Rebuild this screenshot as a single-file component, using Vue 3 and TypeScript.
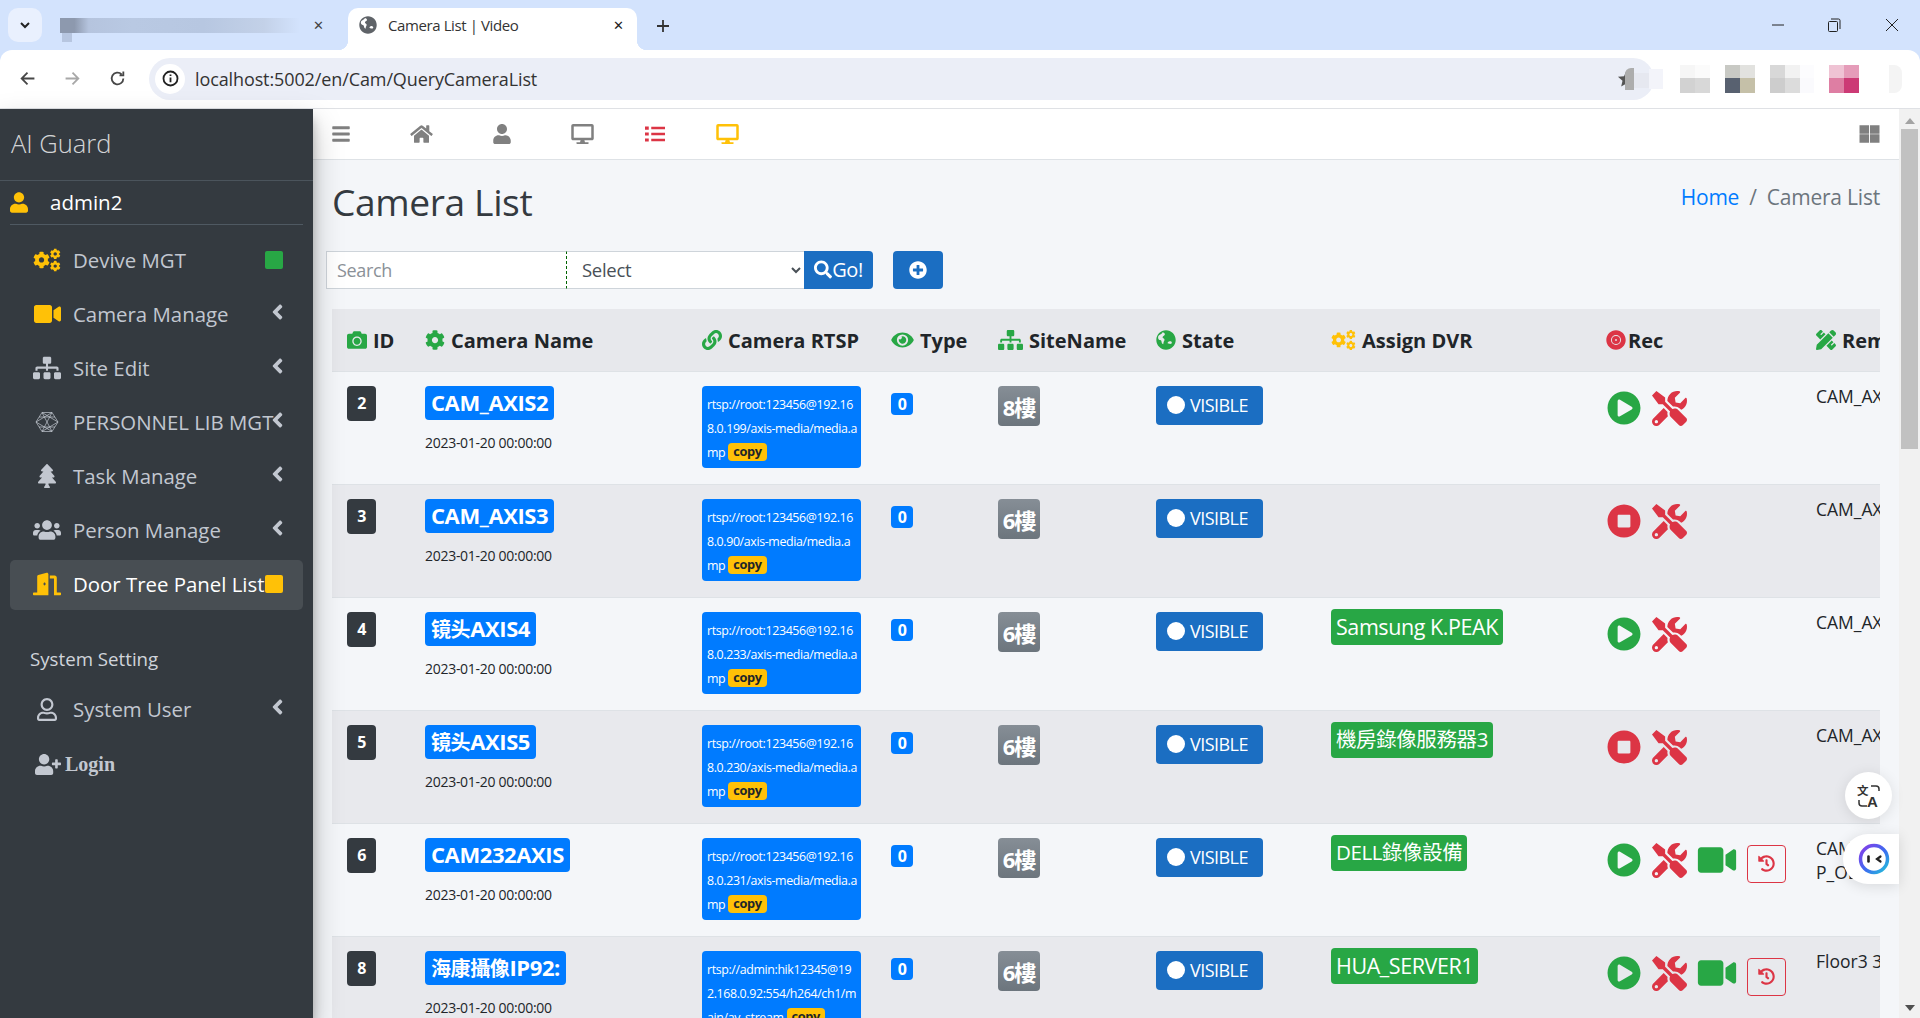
<script setup lang="ts">
import { h } from 'vue'

type Glyph = { vb: string; paths: { d: string; t?: string }[] }
const cog = 'M487.4 315.7l-42.6-24.6c4.3-23.2 4.3-47 0-70.2l42.6-24.6c4.9-2.8 7.1-8.6 5.5-14-11.1-35.6-30-67.8-54.7-94.6-3.8-4.1-10-5.1-14.8-2.3L380.8 110c-17.9-15.4-38.5-27.3-60.8-35.1V25.8c0-5.6-3.9-10.5-9.4-11.7-36.7-8.2-74.3-7.8-109.2 0-5.5 1.2-9.4 6.1-9.4 11.7V75c-22.2 7.9-42.8 19.8-60.8 35.1L88.7 85.5c-4.9-2.8-11-1.9-14.8 2.3-24.7 26.7-43.6 58.9-54.7 94.6-1.7 5.4.6 11.2 5.5 14L67.3 221c-4.3 23.2-4.3 47 0 70.2l-42.6 24.6c-4.9 2.8-7.1 8.6-5.5 14 11.1 35.6 30 67.8 54.7 94.6 3.8 4.1 10 5.1 14.8 2.3l42.6-24.6c17.9 15.4 38.5 27.3 60.8 35.1v49.2c0 5.6 3.9 10.5 9.4 11.7 36.7 8.2 74.3 7.8 109.2 0 5.5-1.2 9.4-6.1 9.4-11.7v-49.2c22.2-7.9 42.8-19.8 60.8-35.1l42.6 24.6c4.9 2.8 11 1.9 14.8-2.3 24.7-26.7 43.6-58.9 54.7-94.6 1.5-5.5-.7-11.3-5.6-14.1zM256 336c-44.1 0-80-35.9-80-80s35.9-80 80-80 80 35.9 80 80-35.9 80-80 80z'
const one = (vb: string, d: string): Glyph => ({ vb, paths: [{ d }] })
const icons: Record<string, Glyph> = {
  bars: one('0 0 448 512', 'M16 132h416c8.837 0 16-7.163 16-16V76c0-8.837-7.163-16-16-16H16C7.163 60 0 67.163 0 76v40c0 8.837 7.163 16 16 16zm0 160h416c8.837 0 16-7.163 16-16v-40c0-8.837-7.163-16-16-16H16c-8.837 0-16 7.163-16 16v40c0 8.837 7.163 16 16 16zm0 160h416c8.837 0 16-7.163 16-16v-40c0-8.837-7.163-16-16-16H16c-8.837 0-16 7.163-16 16v40c0 8.837 7.163 16 16 16z'),
  user: one('0 0 448 512', 'M224 256c70.7 0 128-57.3 128-128S294.7 0 224 0 96 57.3 96 128s57.3 128 128 128zm89.6 32h-16.7c-22.2 10.2-46.9 16-72.9 16s-50.6-5.8-72.9-16h-16.7C60.2 288 0 348.2 0 422.4V464c0 26.5 21.5 48 48 48h352c26.5 0 48-21.5 48-48v-41.6c0-74.2-60.2-134.4-134.4-134.4z'),
  home: one('0 0 576 512', 'M280.37 148.26L96 300.11V464a16 16 0 0 0 16 16l112.06-.29a16 16 0 0 0 15.92-16V368a16 16 0 0 1 16-16h64a16 16 0 0 1 16 16v95.64a16 16 0 0 0 16 16.05L464 480a16 16 0 0 0 16-16V300L295.67 148.26a12.19 12.19 0 0 0-15.3 0zM571.6 251.47L488 182.56V44.05a12 12 0 0 0-12-12h-56a12 12 0 0 0-12 12v72.61L318.47 43a48 48 0 0 0-61 0L4.34 251.47a12 12 0 0 0-1.6 16.9l25.5 31A12 12 0 0 0 45.15 301l235.22-193.74a12.19 12.19 0 0 1 15.3 0L530.9 301a12 12 0 0 0 16.9-1.6l25.5-31a12 12 0 0 0-1.7-16.93z'),
  desktop: one('0 0 576 512', 'M528 0H48C21.5 0 0 21.5 0 48v320c0 26.5 21.5 48 48 48h192l-16 48h-72c-13.3 0-24 10.7-24 24s10.7 24 24 24h272c13.3 0 24-10.7 24-24s-10.7-24-24-24h-72l-16-48h192c26.5 0 48-21.5 48-48V48c0-26.5-21.5-48-48-48zm-16 352H64V64h448v288z'),
  list: one('0 0 512 512', 'M0 64h96v80H0zM160 72h352v64H160zM0 216h96v80H0zM160 224h352v64H160zM0 368h96v80H0zM160 376h352v64H160z'),
  grid: one('0 0 512 512', 'M0 32h244v216H0zM268 32h244v216H268zM0 264h244v216H0zM268 264h244v216H268z'),
  video: one('0 0 576 512', 'M336.2 64H47.8C21.4 64 0 85.4 0 111.8v288.4C0 426.6 21.4 448 47.8 448h288.4c26.4 0 47.8-21.4 47.8-47.8V111.8c0-26.4-21.4-47.8-47.8-47.8zm189.4 37.7L416 177.3v157.4l109.6 75.5c21.2 14.6 50.4-.3 50.4-25.8V127.5c0-25.4-29.1-40.4-50.4-25.8z'),
  search: one('0 0 512 512', 'M505 442.7L405.3 343c-4.5-4.5-10.6-7-17-7H372c27.6-35.3 44-79.7 44-128C416 93.1 322.9 0 208 0S0 93.1 0 208s93.1 208 208 208c48.3 0 92.7-16.4 128-44v16.3c0 6.4 2.5 12.5 7 17l99.7 99.7c9.4 9.4 24.6 9.4 33.9 0l28.3-28.3c9.4-9.4 9.4-24.6.1-34zM208 336c-70.7 0-128-57.2-128-128 0-70.7 57.2-128 128-128 70.7 0 128 57.2 128 128 0 70.7-57.2 128-128 128z'),
  plus: one('0 0 512 512', 'M256 8C119 8 8 119 8 256s111 248 248 248 248-111 248-248S393 8 256 8zm144 276c0 6.6-5.4 12-12 12h-92v92c0 6.6-5.4 12-12 12h-56c-6.6 0-12-5.4-12-12v-92h-92c-6.6 0-12-5.4-12-12v-56c0-6.6 5.4-12 12-12h92v-92c0-6.6 5.4-12 12-12h56c6.6 0 12 5.4 12 12v92h92c6.6 0 12 5.4 12 12v56z'),
  camera: one('0 0 512 512', 'M512 144v288c0 26.5-21.5 48-48 48H48c-26.5 0-48-21.5-48-48V144c0-26.5 21.5-48 48-48h88l12.3-32.9c7-18.7 24.9-31.1 44.9-31.1h125.5c20 0 37.9 12.4 44.9 31.1L376 96h88c26.5 0 48 21.5 48 48zM376 288c0-66.2-53.8-120-120-120s-120 53.8-120 120 53.8 120 120 120 120-53.8 120-120zm-32 0c0 48.5-39.5 88-88 88s-88-39.5-88-88 39.5-88 88-88 88 39.5 88 88z'),
  cog: one('0 0 512 512', cog),
  cogs: { vb: '0 0 640 512', paths: [{ d: cog, t: 'translate(0 60) scale(.76)' }, { d: cog, t: 'translate(385 -6) scale(.48)' }, { d: cog, t: 'translate(385 272) scale(.48)' }] },
  link: one('0 0 512 512', 'M326.612 185.391c59.747 59.809 58.927 155.698.36 214.59-.11.12-.24.25-.36.37l-67.2 67.2c-59.27 59.27-155.699 59.262-214.96 0-59.27-59.26-59.27-155.7 0-214.96l37.106-37.106c9.84-9.84 26.786-3.3 27.294 10.606.648 17.722 3.826 35.527 9.69 52.721 1.986 5.822.567 12.262-3.783 16.612l-13.087 13.087c-28.026 28.026-28.905 73.66-1.155 101.96 28.024 28.579 74.086 28.749 102.325.51l67.2-67.19c28.191-28.191 28.073-73.757 0-101.83-3.701-3.694-7.429-6.564-10.341-8.569a16.037 16.037 0 0 1-6.947-12.606c-.396-10.567 3.348-21.456 11.698-29.806l21.054-21.055c5.521-5.521 14.182-6.199 20.584-1.731a152.482 152.482 0 0 1 20.522 17.197zM467.547 44.449c-59.261-59.262-155.69-59.27-214.96 0l-67.2 67.2c-.12.12-.25.25-.36.37-58.566 58.892-59.387 154.781.36 214.59a152.454 152.454 0 0 0 20.521 17.196c6.402 4.468 15.064 3.789 20.584-1.731l21.054-21.055c8.35-8.35 12.094-19.239 11.698-29.806a16.037 16.037 0 0 0-6.947-12.606c-2.912-2.005-6.64-4.875-10.341-8.569-28.073-28.073-28.191-73.639 0-101.83l67.2-67.19c28.239-28.239 74.3-28.069 102.325.51 27.75 28.3 26.872 73.934-1.155 101.96l-13.087 13.087c-4.35 4.35-5.769 10.79-3.783 16.612 5.864 17.194 9.042 34.999 9.69 52.721.509 13.906 17.454 20.446 27.294 10.606l37.106-37.106c59.271-59.259 59.271-155.699.001-214.959z'),
  eye: one('0 0 576 512', 'M572.52 241.4C518.29 135.59 410.93 64 288 64S57.68 135.64 3.48 241.41a32.35 32.35 0 0 0 0 29.19C57.71 376.41 165.07 448 288 448s230.32-71.64 284.52-177.41a32.35 32.35 0 0 0 0-29.19zM288 400a144 144 0 1 1 144-144 143.93 143.93 0 0 1-144 144zm0-240a95.31 95.31 0 0 0-25.31 3.79 47.85 47.85 0 0 1-66.9 66.9A95.78 95.78 0 1 0 288 160z'),
  sitemap: one('0 0 640 512', 'M128 352H32c-17.67 0-32 14.33-32 32v96c0 17.67 14.33 32 32 32h96c17.67 0 32-14.33 32-32v-96c0-17.67-14.33-32-32-32zm-24-80h192v48h48v-48h192v48h48v-57.59c0-21.17-17.23-38.41-38.41-38.41H344v-64h40c17.67 0 32-14.33 32-32V32c0-17.67-14.33-32-32-32H256c-17.67 0-32 14.33-32 32v96c0 17.67 14.33 32 32 32h40v64H94.41C73.23 224 56 241.23 56 262.41V320h48v-48zm264 80h-96c-17.67 0-32 14.33-32 32v96c0 17.67 14.33 32 32 32h96c17.67 0 32-14.33 32-32v-96c0-17.67-14.33-32-32-32zm240 0h-96c-17.67 0-32 14.33-32 32v96c0 17.67 14.33 32 32 32h96c17.67 0 32-14.33 32-32v-96c0-17.67-14.33-32-32-32z'),
  users: one('0 0 640 512', 'M96 224c35.3 0 64-28.7 64-64s-28.7-64-64-64-64 28.7-64 64 28.7 64 64 64zm448 0c35.3 0 64-28.7 64-64s-28.7-64-64-64-64 28.7-64 64 28.7 64 64 64zm32 32h-64c-17.6 0-33.5 7.1-45.1 18.6 40.3 22.1 68.9 62 75.1 109.4h66c17.7 0 32-14.3 32-32v-32c0-35.3-28.7-64-64-64zm-256 0c61.9 0 112-50.1 112-112S381.9 32 320 32 208 82.1 208 144s50.1 112 112 112zm76.8 32h-8.3c-20.8 10-43.9 16-68.5 16s-47.6-6-68.5-16h-8.3C179.6 288 128 339.6 128 403.2V432c0 26.5 21.5 48 48 48h288c26.5 0 48-21.5 48-48v-28.8c0-63.6-51.6-115.2-115.2-115.2zm-223.7-13.4C161.5 263.1 145.6 256 128 256H64c-35.3 0-64 28.7-64 64v32c0 17.7 14.3 32 32 32h65.9c6.3-47.4 34.9-87.3 75.2-109.4z'),
  userPlus: one('0 0 640 512', 'M624 208h-64v-64c0-8.8-7.2-16-16-16h-32c-8.8 0-16 7.2-16 16v64h-64c-8.8 0-16 7.2-16 16v32c0 8.8 7.2 16 16 16h64v64c0 8.8 7.2 16 16 16h32c8.8 0 16-7.2 16-16v-64h64c8.8 0 16-7.2 16-16v-32c0-8.8-7.2-16-16-16zm-400 48c70.7 0 128-57.3 128-128S294.7 0 224 0 96 57.3 96 128s57.3 128 128 128zm89.6 32h-16.7c-22.2 10.2-46.9 16-72.9 16s-50.6-5.8-72.9-16h-16.7C60.2 288 0 348.2 0 422.4V464c0 26.5 21.5 48 48 48h352c26.5 0 48-21.5 48-48v-41.6c0-74.2-60.2-134.4-134.4-134.4z'),
  userO: one('0 0 448 512', 'M313.6 304c-28.7 0-42.5 16-89.6 16-47.1 0-60.8-16-89.6-16C60.2 304 0 364.2 0 438.4V464c0 26.5 21.5 48 48 48h352c26.5 0 48-21.5 48-48v-25.6c0-74.2-60.2-134.4-134.4-134.4zM400 464H48v-25.6c0-47.6 38.8-86.4 86.4-86.4 14.6 0 38.3 16 89.6 16 51.7 0 74.9-16 89.6-16 47.6 0 86.4 38.8 86.4 86.4V464zM224 288c79.5 0 144-64.5 144-144S303.5 0 224 0 80 64.5 80 144s64.5 144 144 144zm0-240c52.9 0 96 43.1 96 96s-43.1 96-96 96-96-43.1-96-96 43.1-96 96-96z'),
  tree: one('0 0 384 512', 'M378.31 378.49L298.42 288h30.63c9.01 0 16.98-5 20.78-13.06 3.8-8.04 2.55-17.26-3.28-24.05L268.42 160h28.89c9.1 0 17.3-5.35 20.86-13.61 3.52-8.13 1.86-17.59-4.24-24.08L203.66 4.83c-6.03-6.45-17.28-6.45-23.32 0L70.06 122.31c-6.1 6.49-7.75 15.95-4.24 24.08C69.38 154.65 77.59 160 86.69 160h28.89l-78.14 90.91c-5.81 6.78-7.06 15.99-3.27 24.04C37.97 283 45.93 288 54.95 288h30.63L5.69 378.49c-6 6.79-7.36 16.09-3.56 24.26 3.75 8.05 12 13.25 21 13.25H160v24.45l-30.29 48.4c-5.32 10.64 2.42 23.16 14.31 23.16h95.96c11.89 0 19.63-12.52 14.31-23.16L224 440.45V416h136.87c9 0 17.25-5.2 21-13.25 3.81-8.17 2.45-17.47-3.56-24.26z'),
  door: one('0 0 640 512', 'M624 448h-80V113.45C544 86.19 522.47 64 496 64H384v64h96v384h144c8.84 0 16-7.16 16-16v-32c0-8.84-7.16-16-16-16zM312.24 1.01l-192 49.74C105.99 54.44 96 67.7 96 82.92V448H16c-8.84 0-16 7.16-16 16v32c0 8.84 7.16 16 16 16h336V33.18c0-21.58-19.56-37.41-39.76-32.17zM264 288c-13.25 0-24-14.33-24-32s10.75-32 24-32 24 14.33 24 32-10.75 32-24 32z'),
  history: one('0 0 512 512', 'M504 255.531c.253 136.64-111.18 248.372-247.82 248.468-59.015.042-113.223-20.53-155.822-54.911-11.077-8.94-11.905-25.541-1.839-35.607l11.267-11.267c8.609-8.609 22.353-9.551 31.891-1.984C173.062 425.135 212.781 440 256 440c101.705 0 184-82.311 184-184 0-101.705-82.311-184-184-184-48.814 0-93.149 18.969-126.068 49.932l50.754 50.754c10.08 10.08 2.941 27.314-11.313 27.314H24c-8.837 0-16-7.163-16-16V38.627c0-14.254 17.234-21.393 27.314-11.314l49.372 49.372C129.209 34.136 189.552 8 256 8c136.81 0 247.747 110.78 248 247.531zm-180.912 78.784l9.823-12.63c8.138-10.463 6.253-25.542-4.21-33.679L288 256.349V152c0-13.255-10.745-24-24-24h-16c-13.255 0-24 10.745-24 24v135.651l65.409 50.874c10.463 8.137 25.541 6.253 33.679-4.21z'),
  tools: one('0 0 512 512', 'M501.1 395.7L384 278.6c-23.1-23.1-57.6-27.6-85.4-13.9L192 158.1V96L64 0 0 64l96 128h62.1l106.6 106.6c-13.6 27.8-9.2 62.3 13.9 85.4l117.1 117.1c14.6 14.6 38.2 14.6 52.7 0l52.7-52.7c14.5-14.6 14.5-38.2 0-52.7zM331.7 225c28.3 0 54.9 11 74.9 31l19.4 19.4c15.8-6.9 30.8-16.5 43.8-29.5 37.1-37.1 49.7-89.3 37.9-136.7-2.2-9-13.5-12.1-20.1-5.5l-74.4 74.4-67.9-11.3L334 98.9l74.4-74.4c6.6-6.6 3.4-17.9-5.7-20.2-47.4-11.7-99.6.9-136.6 37.9-28.5 28.5-41.9 66.1-41.2 103.6l82.1 82.1c8.1-1.9 16.5-2.9 24.7-2.9zm-103.9 82l-56.7-56.7L18.7 402.8c-25 25-25 65.5 0 90.5s65.5 25 90.5 0l123.6-123.6c-7.6-19.9-9.9-41.6-5-62.7zM64 472c-13.2 0-24-10.8-24-24 0-13.3 10.7-24 24-24s24 10.7 24 24c0 13.2-10.7 24-24 24z'),
  play: one('0 0 512 512', 'M256 8C119 8 8 119 8 256s111 248 248 248 248-111 248-248S393 8 256 8zm115.7 272l-176 101c-15.8 8.8-35.7-2.5-35.7-21V152c0-18.4 19.8-29.8 35.7-21l176 107c16.4 9.2 16.4 32.9 0 42z'),
  stop: one('0 0 512 512', 'M256 8C119 8 8 119 8 256s111 248 248 248 248-111 248-248S393 8 256 8zm96 328c0 8.8-7.2 16-16 16H176c-8.8 0-16-7.2-16-16V176c0-8.8 7.2-16 16-16h160c8.8 0 16 7.2 16 16v160z'),
  vinyl: one('0 0 512 512', 'M256 152a104 104 0 1 0 104 104 104 104 0 0 0-104-104zm0 128a24 24 0 1 1 24-24 24 24 0 0 1-24 24zm0-272C119 8 8 119 8 256s111 248 248 248 248-111 248-248S393 8 256 8zm0 376a128 128 0 1 1 128-128 128 128 0 0 1-128 128z'),
  ruler: one('0 0 512 512', 'M109.46 244.04l134.58-134.56-44.12-44.12-61.68 61.68a7.919 7.919 0 0 1-11.21 0l-11.21-11.21c-3.1-3.1-3.1-8.12 0-11.21l61.68-61.68-33.64-33.65C131.47-3.1 111.39-3.1 99 9.29L9.29 99c-12.38 12.39-12.39 32.47 0 44.86l100.17 100.18zm388.47-116.8c18.76-18.76 18.75-49.17 0-67.93l-45.25-45.25c-18.76-18.76-49.18-18.76-67.95 0l-46.02 46.01 113.2 113.2 46.02-46.03zM316.08 82.71l-297 296.96L.32 487.11c-2.53 14.49 10.09 27.11 24.59 24.56l107.45-18.84L429.28 195.9 316.08 82.71zm186.63 285.43l-33.64-33.64-61.68 61.68c-3.1 3.1-8.12 3.1-11.21 0l-11.21-11.21c-3.09-3.1-3.09-8.12 0-11.21l61.68-61.68-44.14-44.14L267.93 402.5l100.21 100.2c12.39 12.39 32.47 12.39 44.86 0l89.71-89.7c12.39-12.39 12.39-32.47 0-44.86z'),
  globe: one('0 0 512 512', 'M256 8C119 8 8 119 8 256s111 248 248 248 248-111 248-248S393 8 256 8zM168 60c-8 30-40 50-70 62-30 12-50 40-44 80 4 30 24 50 54 54 20 2 30 20 34 44 4 26 14 50 40 66 14-30 6-60 26-84 16-20 14-46-8-62-18-12-34-20-30-42 4-26 36-30 52-52 12-16 6-50-54-66zm210 230c-30-6-58 0-74 22-12 16-4 34 18 36 24 2 44 14 66 4 24-10 26-52-10-62z'),
  angle: one('0 0 256 512', 'M31.7 239l136-136c9.4-9.4 24.6-9.4 33.9 0l22.6 22.6c9.4 9.4 9.4 24.6 0 33.9L127.9 256l96.4 96.4c9.4 9.4 9.4 24.6 0 33.9L201.7 409c-9.4 9.4-24.6 9.4-33.9 0l-136-136c-9.5-9.4-9.5-24.6-.1-34z'),
}
const Ic = (p: { n: string }) =>
  h('svg', { viewBox: icons[p.n].vb, fill: 'currentColor', 'fill-rule': 'evenodd', 'aria-hidden': 'true' },
    icons[p.n].paths.map((s) => h('path', { d: s.d, transform: s.t })))
Ic.props = ['n']

const menu = [
  { icon: 'cogs', label: 'Devive MGT', tone: 'yellow', mark: 'green' },
  { icon: 'video', label: 'Camera Manage', tone: 'yellow', arrow: true },
  { icon: 'sitemap', label: 'Site Edit', arrow: true },
  { icon: 'hex', label: 'PERSONNEL LIB MGT', arrow: true },
  { icon: 'tree', label: 'Task Manage', arrow: true },
  { icon: 'users', label: 'Person Manage', arrow: true },
  { icon: 'door', label: 'Door Tree Panel List', tone: 'yellow', mark: 'yellow', active: true },
]
const heads = [
  { icon: 'camera', label: 'ID', tone: 'green', cls: 'w-id' },
  { icon: 'cog', label: 'Camera Name', tone: 'green', cls: 'w-name' },
  { icon: 'link', label: 'Camera RTSP', tone: 'green', cls: 'w-rtsp' },
  { icon: 'eye', label: 'Type', tone: 'green', cls: 'w-type' },
  { icon: 'sitemap', label: 'SiteName', tone: 'green', cls: 'w-site' },
  { icon: 'globe', label: 'State', tone: 'green', cls: 'w-state' },
  { icon: 'cogs', label: 'Assign DVR', tone: 'yellow', cls: 'w-dvr' },
  { icon: 'vinyl', label: 'Rec', tone: 'red', cls: 'w-rec tight' },
  { icon: 'ruler', label: 'Remark', tone: 'green', cls: 'w-rem' },
]
const axis = (ip: string) => ['rtsp://root:123456@192.16', `8.0.${ip}/axis-media/media.a`, 'mp']
const rows = [
  { id: 2, zh: '', name: 'CAM_AXIS2', rtsp: axis('199'), site: '8樓', dvr: '', running: false, extra: false, rem: 'CAM_AXIS2' },
  { id: 3, zh: '', name: 'CAM_AXIS3', rtsp: axis('90'), site: '6樓', dvr: '', running: true, extra: false, rem: 'CAM_AXIS3' },
  { id: 4, zh: '镜头', name: 'AXIS4', rtsp: axis('233'), site: '6樓', dvr: 'Samsung K.PEAK', running: false, extra: false, rem: 'CAM_AXIS4' },
  { id: 5, zh: '镜头', name: 'AXIS5', rtsp: axis('230'), site: '6樓', dvr: '機房錄像服務器3', running: true, extra: false, rem: 'CAM_AXIS5' },
  { id: 6, zh: '', name: 'CAM232AXIS', rtsp: axis('231'), site: '6樓', dvr: 'DELL錄像設備', running: false, extra: true, rem: 'CAM232A\nP_OE' },
  { id: 8, zh: '海康攝像', name: 'IP92:', rtsp: ['rtsp://admin:hik12345@19', '2.168.0.92:554/h264/ch1/m', 'ain/av_stream'], site: '6樓', dvr: 'HUA_SERVER1', running: false, extra: true, rem: 'Floor3 3F' },
]
const hasCjk = (s: string) => /[^\x00-\x7f]/.test(s)
const tiles = [
  { cls: 't1', colors: ['#f6f6f6', '#fbfbfb', '#d2d2d2', '#d8d8d8'] },
  { cls: 't1', colors: ['#c8c9c4', '#e2e2df', '#586170', '#c5c0a8'] },
  { cls: 't2', colors: ['#d8d8d8', '#f2f2f2', '#fcfcfe', '#cdcdcd', '#dcdcdc', '#fafafd'] },
  { cls: 't1', colors: ['#efc3d4', '#e59cb9', '#de7ea3', '#cc3a75'] },
]
</script>

<template>
  <div class="page">
    <header class="chrome">
      <div class="tabstrip">
        <button class="tab-menu" aria-label="tabs">
          <svg viewBox="0 0 12 8"><path d="M2 2l4 4 4-4" /></svg>
        </button>
        <div class="tab-blur">
          <span class="blur-bar"></span>
          <span class="tab-x">✕</span>
        </div>
        <div class="tab-active">
          <svg class="favicon" viewBox="0 0 512 512"><path fill="#5f6368" fill-rule="evenodd" :d="icons.globe.paths[0].d" /></svg>
          <span class="tab-title">Camera List | Video</span>
          <span class="tab-x dark">✕</span>
        </div>
        <svg class="new-tab" viewBox="0 0 14 14"><path d="M7 1v12M1 7h12" /></svg>
        <div class="win">
          <svg viewBox="0 0 14 14"><path d="M1 7h12" /></svg>
          <svg viewBox="0 0 14 14"><path d="M1.5 4.5a1 1 0 0 1 1-1h7a1 1 0 0 1 1 1v8a1 1 0 0 1-1 1h-7a1 1 0 0 1-1-1zM4 1h7.5a1.5 1.5 0 0 1 1.5 1.5V11" /></svg>
          <svg viewBox="0 0 14 14"><path d="M1 1l12 12M13 1L1 13" /></svg>
        </div>
      </div>
      <div class="toolbar">
        <svg class="tb-ico" viewBox="0 0 16 16"><path d="M14.5 8h-12M8 2.5L2.5 8 8 13.5" /></svg>
        <svg class="tb-ico off" viewBox="0 0 16 16"><path d="M1.5 8h12M8 2.5L13.5 8 8 13.500" /></svg>
        <svg class="tb-ico" viewBox="0 0 16 16"><path d="M13.5 8a5.5 5.5 0 1 1-1.6-3.9M13.5 1.5v3.6H9.9" /></svg>
        <div class="omni">
          <span class="omni-info">
            <svg viewBox="0 0 16 16"><circle cx="8" cy="8" r="6.6" /><path d="M8 7v4.5M8 4.2v1.4" /></svg>
          </span>
          <span class="url">localhost:5002/en/Cam/QueryCameraList</span>
          <span class="omni-star">
            <svg viewBox="0 0 20 20"><path d="M10 1l2.6 6 6.4.6-4.8 4.2 1.4 6.2L10 14.8 4.4 18l1.4-6.2L1 7.6 7.4 7z" /></svg>
            <i class="star-a"></i><i class="star-b"></i><i class="star-c"></i>
          </span>
        </div>
        <div class="exts">
          <div v-for="(t, i) in tiles" :key="i" :class="['mosaic', t.cls]">
            <i v-for="(c, j) in t.colors" :key="j" :style="{ background: c }"></i>
          </div>
          <i class="ext-last"></i>
        </div>
      </div>
    </header>

    <div class="body">
      <aside class="sidebar">
        <div class="brand">AI Guard</div>
        <div class="userpanel">
          <Ic n="user" class="up-ico" />
          <span>admin2</span>
        </div>
        <nav class="nav">
          <a v-for="m in menu" :key="m.label" :class="['item', { active: m.active }]">
            <span :class="['item-ico', m.tone]">
              <svg v-if="m.icon === 'hex'" class="hex" viewBox="0 0 24 24">
                <path d="M7 2.5h10L23 12l-6 9.5H7L1 12zM7 2.5L17 21.500M17 2.500L7 21.500M1 12l16-9.500M1 12l16 9.500M23 12L7 2.500M23 12L7 21.500M4 7h16M4 17h16" />
              </svg>
              <Ic v-else :n="m.icon" :class="'i-' + m.icon" />
            </span>
            <span class="item-label">{{ m.label }}</span>
            <Ic v-if="m.arrow" n="angle" class="arrow" />
            <i v-if="m.mark" :class="['mark', m.mark]"></i>
          </a>
          <div class="nav-head">System Setting</div>
          <a class="item">
            <span class="item-ico"><Ic n="userO" class="i-userO" /></span>
            <span class="item-label">System User</span>
            <Ic n="angle" class="arrow" />
          </a>
          <a class="login"><Ic n="userPlus" class="i-login" /><b>Login</b></a>
        </nav>
      </aside>

      <main class="main">
        <div class="topnav">
          <Ic n="bars" class="tn w18" />
          <Ic n="home" class="tn w23" />
          <Ic n="user" class="tn w18" />
          <Ic n="desktop" class="tn w25 nudge" />
          <Ic n="list" class="tn w20 red pull" />
          <Ic n="desktop" class="tn w25 yellow pull" />
          <Ic n="grid" class="tn w21 end" />
        </div>
        <section class="content">
          <div class="title-row">
            <h1>Camera List</h1>
            <div class="crumb"><a>Home</a><i>/</i><span>Camera List</span></div>
          </div>
          <form class="search" @submit.prevent>
            <input class="s-input" placeholder="Search" />
            <select class="s-select"><option>Select</option></select>
            <button class="s-go"><Ic n="search" class="go-ico" />Go!</button>
            <button class="s-add" aria-label="add"><Ic n="plus" class="add-ico" /></button>
          </form>
          <div class="table-wrap">
            <table>
              <thead>
                <tr>
                  <th v-for="c in heads" :key="c.label" :class="c.cls">
                    <span class="th-in">
                      <Ic :n="c.icon" :class="['th-ico', c.tone]" />{{ c.label }}
                    </span>
                  </th>
                </tr>
              </thead>
              <tbody>
                <tr v-for="r in rows" :key="r.id">
                  <td><span class="b-id">{{ r.id }}</span></td>
                  <td>
                    <span class="b-name"><span v-if="r.zh" class="zh">{{ r.zh }}</span>{{ r.name }}</span>
                    <div class="date">2023-01-20 00:00:00</div>
                  </td>
                  <td>
                    <div class="b-rtsp">
                      <div v-for="(l, i) in r.rtsp" :key="i" class="rline">
                        {{ l }}<span v-if="i === 2" class="copy">copy</span>
                      </div>
                    </div>
                  </td>
                  <td><span class="b-type">0</span></td>
                  <td><span class="b-site">{{ r.site }}</span></td>
                  <td>
                    <button class="b-state"><i class="dot"></i>VISIBLE</button>
                  </td>
                  <td class="dvr-cell"><span v-if="r.dvr" :class="['b-dvr', { cjk: hasCjk(r.dvr) }]">{{ r.dvr }}</span></td>
                  <td>
                    <div class="rec">
                      <Ic :n="r.running ? 'stop' : 'play'" :class="['r-ico', r.running ? 'red' : 'green']" />
                      <Ic n="tools" class="r-tools red" />
                      <template v-if="r.extra">
                        <Ic n="video" class="r-video green" />
                        <span class="r-hist"><Ic n="history" /></span>
                      </template>
                    </div>
                  </td>
                  <td class="rem">{{ r.rem }}</td>
                </tr>
              </tbody>
            </table>
          </div>
        </section>
        <button class="fl-trans" aria-label="translate">
          <svg viewBox="0 0 24 24">
            <text x="0" y="11" class="tr-zh">文</text>
            <text x="10" y="23" class="tr-en">A</text>
            <path d="M14 2h5a3 3 0 0 1 3 3v2M10 22H5a3 3 0 0 1-3-3v-3" />
          </svg>
        </button>
        <div class="fl-ai">
          <svg viewBox="0 0 32 32">
            <defs>
              <linearGradient id="aig" x1="0" y1="0" x2="1" y2="1">
                <stop offset="0" stop-color="#8a3be8" />
                <stop offset=".55" stop-color="#3b6cf0" />
                <stop offset="1" stop-color="#22c5d8" />
              </linearGradient>
            </defs>
            <circle cx="16" cy="16" r="13.500" fill="#fff" stroke="url(#aig)" stroke-width="3.500" />
            <path d="M10.500 13.500v5" stroke="#222" stroke-width="2.600" stroke-linecap="round" fill="none" />
            <path d="M22.500 13.500l-3.500 2.500 3.500 2.500" stroke="#222" stroke-width="2.200" stroke-linecap="round" fill="none" />
          </svg>
        </div>
      </main>

      <div class="scrollbar">
        <i class="up"></i>
        <div class="thumb"></div>
        <i class="down"></i>
      </div>
    </div>
  </div>
</template>

<style>
html, body { margin: 0; height: 1018px; overflow: hidden; background: #f4f6f9; }
</style>

<style scoped>
* { box-sizing: border-box; }
.page {
  width: 1920px; height: 1018px; overflow: hidden; display: flex; flex-direction: column;
  font-family: "Open Sans", "Noto Sans CJK TC", sans-serif; color: #212529;
  letter-spacing: -.025em;
}
.chrome { flex: none; background: #d3e3fd; }
.tabstrip { height: 50px; display: flex; align-items: flex-start; position: relative; padding: 8px 0 0 8px; }
.tab-menu { width: 34px; height: 34px; border: 0; border-radius: 10px; background: #e9f0fe; display: flex; align-items: center; justify-content: center; padding: 0; }
.tab-menu svg { width: 12px; height: 8px; fill: none; stroke: #222; stroke-width: 2; }
.tab-blur { width: 306px; display: flex; align-items: center; height: 34px; padding-left: 18px; }
.blur-bar { width: 240px; height: 15px; position: relative; background: linear-gradient(90deg, #8d99ae 0, #8d99ae 6%, #b5c4de 12%, #b9c9e3 30%, #b7c7e1 60%, #c3d1e8 85%, #d3e3fd 100%); }
.blur-bar::after { content: ""; position: absolute; left: 2px; top: 15px; width: 10px; height: 9px; background: #b7c6e0; }
.tab-x { font-size: 13px; font-weight: 700; color: #444; margin-left: 13px; font-family: "DejaVu Sans", sans-serif; }
.tab-active { width: 289px; height: 42px; background: #fff; border-radius: 10px 10px 0 0; display: flex; align-items: center; padding: 0 0 8px 11px; position: relative; }
.tab-active::before, .tab-active::after { content: ""; position: absolute; bottom: 0; width: 10px; height: 10px; }
.tab-active::before { left: -10px; background: radial-gradient(circle at 0 0, transparent 10px, #fff 10.500px); }
.tab-active::after { right: -10px; background: radial-gradient(circle at 100% 0, transparent 10px, #fff 10.500px); }
.favicon { width: 18px; height: 18px; flex: none; }
.tab-title { font-size: 15px; color: #333; margin-left: 11px; width: 213px; white-space: nowrap; }
.tab-x.dark { margin-left: 12px; color: #222; }
.new-tab { width: 14px; height: 14px; margin: 11px 0 0 19px; fill: none; stroke: #333; stroke-width: 1.800; }
.win { margin-left: auto; display: flex; gap: 44px; padding: 10px 21px 0 0; }
.win svg { width: 14px; height: 14px; fill: none; stroke: #222; stroke-width: 1; }
.win svg:nth-child(2) { margin-left: -2px; }
.toolbar { height: 59px; background: #fff; border-radius: 12px 12px 0 0; display: flex; align-items: center; padding: 0 0 1px 19px; border-bottom: 1px solid #dfe1e5; }
.tb-ico { width: 17px; height: 17px; fill: none; stroke: #474747; stroke-width: 1.700; flex: none; margin-right: 28px; }
.tb-ico.off { stroke: #a8a8a8; }
.tb-ico:nth-of-type(3) { margin-right: 24px; }
.omni { width: 1505px; height: 42px; margin-left: -1px; background: #ebeef7; border-radius: 21px; display: flex; align-items: center; padding-left: 6px; position: relative; }
.omni-info { width: 30px; height: 30px; border-radius: 50%; background: #fff; display: flex; align-items: center; justify-content: center; }
.omni-info svg { width: 17px; height: 17px; fill: none; stroke: #222; stroke-width: 1.700; }
.url { font-size: 18px; margin-left: 10px; color: #333; letter-spacing: -.006em; white-space: nowrap; }
.omni-star { position: absolute; left: 1468px; top: 10px; width: 48px; height: 22px; }
.omni-star svg { width: 19px; height: 22px; fill: #555; position: absolute; left: 0; top: 0; }
.omni-star i { position: absolute; }
.star-a { left: 8px; top: 0; width: 9px; height: 22px; background: #adadad; border-radius: 6px 0 0 0; }
.star-b { left: 17px; top: 5px; width: 15px; height: 15px; background: #e6e8f0; }
.star-c { left: 32px; top: 1px; width: 14px; height: 20px; background: #f3f4fa; }
.exts { display: flex; align-items: center; gap: 15px; margin-left: 26px; }
.mosaic { display: grid; grid-template-rows: 13px 15px; height: 28px; }
.mosaic.t1 { grid-template-columns: 15px 15px; }
.mosaic.t2 { grid-template-columns: 15px 15px 14px; }
.ext-last { width: 13px; height: 28px; margin-left: 15px; background: #f4f4f4; border-radius: 0 8px 8px 0; }

.body { flex: 1; min-height: 0; display: flex; position: relative; }
.sidebar { width: 313px; flex: none; background: #343a40; box-shadow: 0 14px 28px rgba(0,0,0,.25), 0 10px 10px rgba(0,0,0,.22); position: relative; z-index: 2; color: #c2c7d0; letter-spacing: 0; }
.brand { height: 72px; padding: 0 11px 4px; display: flex; align-items: center; font-size: 25.500px; font-weight: 300; color: rgba(255,255,255,.8); border-bottom: 1px solid #4b545c; white-space: nowrap; }
.userpanel { margin: 0 10px; height: 44px; border-bottom: 1px solid #4f5962; display: flex; align-items: center; color: #fff; font-size: 20.500px; padding-bottom: 1px; }
.up-ico { width: 18px; height: 21px; color: #ffc107; margin-right: 22px; }
.nav { padding: 11px 10px 0; display: flex; flex-direction: column; }
.item { height: 50px; margin-bottom: 4px; border-radius: 5px; display: flex; align-items: center; padding: 0 0 2px 17px; position: relative; font-size: 20.400px; white-space: nowrap; }
.item.active { background: rgba(255,255,255,.1); color: #fff; }
.item-ico { width: 40px; height: 30px; display: flex; align-items: center; justify-content: center; margin-right: 6px; flex: none; }
.yellow { color: #ffc107; }
.green { color: #28a745; }
.red { color: #dc3545; }
.i-cogs, .i-sitemap, .i-users, .i-door { width: 28px; height: 24px; }
.i-video { width: 27px; height: 24px; }
.i-tree { width: 18px; height: 24px; }
.i-userO { width: 20px; height: 23px; }
.hex { width: 24px; height: 24px; fill: none; stroke: #c2c7d0; stroke-width: .7; }
.arrow { position: absolute; right: 19px; top: 10px; width: 13px; height: 24px; color: #c2c7d0; }
.mark { position: absolute; right: 20px; top: 15px; width: 18px; height: 18px; border-radius: 2px; }
.mark.green { background: #28a745; }
.mark.yellow { background: #ffc107; }
.nav-head { height: 52px; margin-top: 18px; padding: 14px 0 0 20px; font-size: 18.700px; color: #d0d4db; }
.nav-head + .item { margin-top: 1px; }
.login { display: flex; align-items: center; margin: 14px 0 0 25px; font-family: "Liberation Serif", serif; font-size: 20px; color: #c2c7d0; letter-spacing: 0; }
.login b { margin-left: 4px; }
.i-login { width: 26px; height: 21px; }

.main { flex: 1; min-width: 0; position: relative; background: #f4f6f9; }
.topnav { height: 51px; background: #fff; border-bottom: 1px solid #dee2e6; display: flex; align-items: center; gap: 60px; padding: 0 19px 0 19px; color: #808080; }
.tn { height: 20px; flex: none; }
.w18 { width: 18px; } .w20 { width: 20px; } .w21 { width: 21px; } .w23 { width: 23px; } .w25 { width: 25px; }
.tn.red { color: #dc3545; }
.tn.yellow { color: #ffc107; }
.nudge { margin-left: -1px; }
.pull { margin-left: -10px; }
.end { margin-left: auto; }
.content { padding: 0 19px; }
.title-row { height: 91px; display: flex; justify-content: space-between; }
h1 { margin: 17px 0 0; font-size: 37.200px; font-weight: 400; line-height: 50px; color: #343a40; white-space: nowrap; }
.crumb { display: flex; align-items: center; height: 30px; margin-top: 22px; font-size: 21px; color: #6c757d; white-space: nowrap; letter-spacing: -.01em; }
.crumb a { color: #007bff; }
.crumb i { font-style: normal; margin: 0 10px; }
.search { display: flex; align-items: stretch; height: 38px; margin-left: -6px; }
.s-input { width: 240px; border: 1px solid #ced4da; border-right: 0; background: #fff; padding: 0 10px; font: inherit; font-size: 18px; letter-spacing: -.02em; outline: 0; }
.s-input::placeholder { color: #8b9198; }
.s-select { width: 238px; border: 1px solid #ced4da; border-left: 1px dashed #006400; border-right: 0; background: #fff; padding: 0 11px 2px; font: inherit; font-size: 18.500px; color: #495057; letter-spacing: -.015em; outline: 0; }
.s-go { width: 69px; border: 0; border-radius: 0 4px 4px 0; background: #1b6ec2; color: #fff; font: inherit; font-size: 20px; letter-spacing: -.025em; display: flex; align-items: center; justify-content: center; padding: 0 0 1px; }
.go-ico { width: 18px; height: 19px; flex: none; }
.s-add { width: 50px; margin-left: 20px; border: 0; border-radius: 4px; background: #1b6ec2; color: #fff; display: flex; align-items: center; justify-content: center; padding: 0; }
.add-ico { width: 18px; height: 18px; }
.table-wrap { margin-top: 20px; overflow: hidden; width: 1548px; }
table { border-collapse: collapse; table-layout: fixed; width: 1669px; font-size: 16px; }
.w-id { width: 78px; } .w-name { width: 277px; } .w-rtsp { width: 189px; } .w-type { width: 107px; }
.w-site { width: 158px; } .w-state { width: 175px; } .w-dvr { width: 275px; } .w-rec { width: 210px; } .w-rem { width: 200px; }
th { height: 62px; background: #e7e8ec; padding: 2px 0 0 15px; font-size: 20px; font-weight: 700; text-align: left; border-bottom: 1px solid #dee2e6; color: #212529; white-space: nowrap; overflow: hidden; letter-spacing: 0; }
.th-in { display: flex; align-items: center; gap: 6px; }
.tight .th-in { gap: 2px; }
.th-ico { height: 20px; width: 20px; flex: none; margin-top: -2px; }
.w-site .th-ico, .w-dvr .th-ico { width: 25px; }
.w-type .th-ico { width: 23px; }
td { vertical-align: top; padding: 14px 0 15px 15px; border-top: 1px solid #dee2e6; height: 113px; }
tbody tr:nth-child(even) td { background: #e8e9ed; }
.b-id { display: flex; width: 29px; height: 35px; align-items: center; justify-content: center; background: #343a40; color: #fff; font-weight: 700; font-size: 16px; border-radius: 4px; }
.b-name { display: inline-block; height: 34px; padding: 0 6px; line-height: 33px; background: #007bff; color: #fff; font-size: 22px; font-weight: 700; border-radius: 4px; white-space: nowrap; }
.zh { font-size: 20px; }
.date { margin-top: 13px; font-size: 14px; line-height: 20px; color: #212529; letter-spacing: -.02em; }
.b-rtsp { width: 159px; height: 82px; background: #007bff; color: #fff; border-radius: 4px; font-size: 12.400px; padding: 7px 0 0 5px; overflow: hidden; }
.rline { height: 24px; line-height: 24px; white-space: nowrap; letter-spacing: -.03em; }
.copy { display: inline-block; height: 18px; line-height: 17px; padding: 0 5px; margin-left: 3px; background: #ffc107; color: #212529; font-weight: 700; border-radius: 4px; font-size: 12.800px; vertical-align: 1px; }
.b-type { display: flex; width: 22px; height: 22px; margin: 7px 0 0; align-items: center; justify-content: center; background: #007bff; color: #fff; font-weight: 700; font-size: 16px; border-radius: 4px; }
.b-site { display: flex; width: 42px; height: 40px; align-items: center; justify-content: center; background: linear-gradient(#868e96, #6c757d); color: #fff; font-weight: 700; font-size: 22px; border-radius: 4px; letter-spacing: -.05em; white-space: nowrap; }
.b-state { width: 107px; height: 39px; border: 0; background: #1b6ec2; color: #fff; border-radius: 4px; display: flex; align-items: center; padding: 0 0 0 11px; font: inherit; font-size: 18px; letter-spacing: -.03em; }
.dot { width: 18px; height: 18px; border-radius: 50%; background: #fff; margin-right: 5px; flex: none; }
.dvr-cell { padding-top: 11px; }
.b-dvr { display: inline-block; vertical-align: top; height: 36px; line-height: 35px; padding: 0 5px; background: #28a745; color: #fff; font-size: 21.500px; border-radius: 4px; white-space: nowrap; letter-spacing: -.02em; }
.b-dvr.cjk { font-size: 20.500px; }
.rec { display: flex; align-items: flex-start; padding: 5px 0 0 1px; }
.r-ico { width: 34px; height: 34px; flex: none; }
.r-tools { width: 35px; height: 35px; margin-left: 11px; flex: none; }
.r-video { width: 40px; height: 34px; margin: 0 0 0 10px; flex: none; }
.r-hist { width: 39px; height: 38px; margin: 2px 0 0 10px; border: 1px solid #dc3545; border-radius: 4px; color: #dc3545; display: flex; align-items: center; justify-content: center; flex: none; }
.r-hist svg { width: 17px; height: 17px; }
.rem { white-space: pre-line; line-height: 24px; padding-top: 12px; font-size: 17.500px; overflow: hidden; letter-spacing: 0; }
.fl-trans { position: absolute; left: 1532px; top: 663px; width: 47px; height: 47px; border-radius: 50%; background: #fff; border: 0; padding: 0; box-shadow: 0 2px 14px rgba(0,0,0,.1); display: flex; align-items: center; justify-content: center; z-index: 3; }
.fl-trans svg { width: 24px; height: 24px; fill: none; stroke: #333; stroke-width: 1.500; }
.tr-zh { font-family: "Noto Sans CJK SC", sans-serif; font-size: 11.500px; font-weight: 700; fill: #333; stroke: none; }
.tr-en { font-family: "Liberation Sans", sans-serif; font-size: 15px; font-weight: 700; fill: #333; stroke: none; }
.fl-ai { position: absolute; right: 0; top: 725px; width: 56px; height: 50px; border-radius: 25px 0 0 25px; background: #fff; box-shadow: 0 2px 14px rgba(0,0,0,.12); display: flex; align-items: center; padding-left: 15px; z-index: 3; }
.fl-ai svg { width: 32px; height: 32px; }
.scrollbar { width: 21px; flex: none; background: #f1f1f1; display: flex; flex-direction: column; align-items: center; }
.thumb { width: 17px; height: 320px; background: #c1c1c1; margin-top: 5px; }
.up { border: 5px solid transparent; border-top: 0; border-bottom: 6px solid #a3a3a3; margin-top: 9px; }
.down { border: 5px solid transparent; border-bottom: 0; border-top: 6px solid #505050; margin-top: auto; margin-bottom: 7px; }
</style>
